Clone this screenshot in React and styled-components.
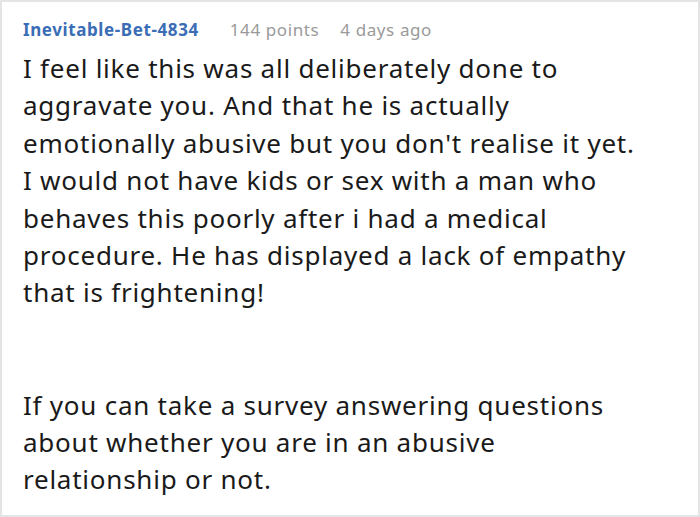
import React from 'react';
import styled, { createGlobalStyle } from 'styled-components';

const GlobalStyle = createGlobalStyle`
  html, body {
    margin: 0;
    padding: 0;
    background: #ffffff;
  }
  body {
    font-family: "Noto Sans", "Open Sans", sans-serif;
  }
`

const Card = styled.div`
  box-sizing: border-box;
  width: 700px;
  height: 517px;
  border: 2px solid #e4e4e4;
  padding: 14px 55px 0 21px;
  background: #fff;
  overflow: hidden;
`

const Meta = styled.div`
  display: flex;
  align-items: baseline;
  font-size: 17px;
  line-height: 28px;
  letter-spacing: 0.6px;
`

const Author = styled.span`
  color: #3a6db5;
  font-weight: 700;
  margin-right: 31px;
`

const Info = styled.span`
  color: #9a9a9a;
  margin-right: 21px;
`

const Body = styled.div`
  margin-top: 6px;
  color: #1a1a1a;
  font-size: 26px;
  line-height: 37.4px;
  letter-spacing: 0.76px;
`

const Paragraph = styled.p`
  margin: 0 0 74.8px;
`

const comment = {
  author: 'Inevitable-Bet-4834',
  points: '144 points',
  age: '4 days ago',
  paragraphs: [
    "I feel like this was all deliberately done to aggravate you. And that he is actually emotionally abusive but you don't realise it yet. I would not have kids or sex with a man who behaves this poorly after i had a medical procedure. He has displayed a lack of empathy that is frightening!",
    'If you can take a survey answering questions about whether you are in an abusive relationship or not.',
  ],
}

const App = () => {
  return (
    <>
      <GlobalStyle />
      <Card>
        <Meta>
          <Author>{comment.author}</Author>
          <Info>{comment.points}</Info>
          <Info>{comment.age}</Info>
        </Meta>
        <Body>
          {comment.paragraphs.map((text, i) => (
            <Paragraph key={i}>{text}</Paragraph>
          ))}
        </Body>
      </Card>
    </>
  )
}

export default App;
